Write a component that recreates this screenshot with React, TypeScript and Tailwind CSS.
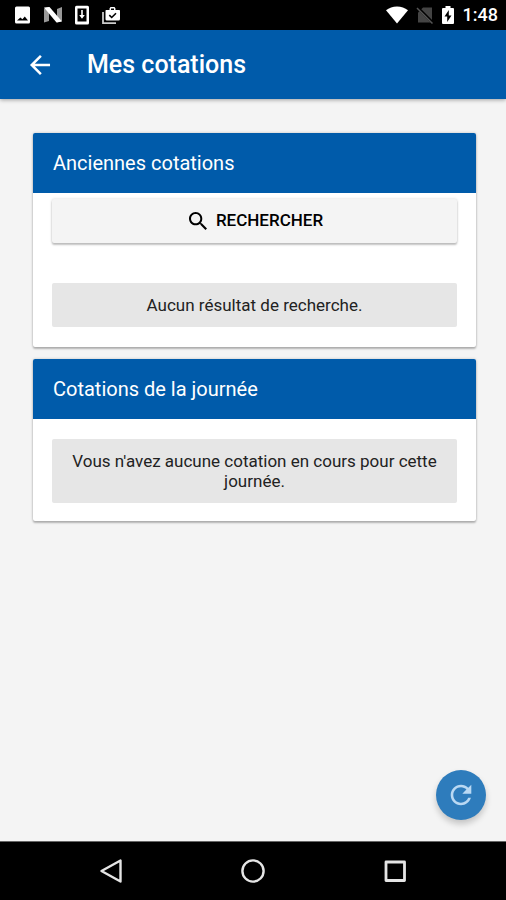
import type { ReactNode } from "react";

function StatusBar() {
  return (
    <div className="flex h-[30px] items-center justify-between bg-black pr-2 pl-3.5 text-white">
      <div className="flex items-center gap-[11px]">
        <svg viewBox="0 0 18 20" className="h-5 w-[18px]">
          <path fill="#fff" d="M2.5 1.5h12a1.5 1.5 0 0 1 1.500 1.500v14a1.500 1.500 0 0 1-1.500 1.500h-12A1.500 1.500 0 0 1 1 17V3a1.500 1.500 0 0 1 1.500-1.500z" />
          <path fill="#000" d="M3 15.500h11l-3.200-4-2.400 2.800-2-1.800z" />
        </svg>
        <svg viewBox="0 0 20 20" className="h-5 w-5">
          <path fill="#999" d="M1 3.500 6 2v14l-5 1.500zM14 4l5-2v14l-5 1.500z" />
          <path fill="#fff" d="M1 2.500 6.500 2 19 16.500l-5.500 1z" />
        </svg>
        <svg viewBox="0 0 16 20" className="h-5 w-4">
          <rect x="1" y="0.800" width="14" height="18.600" rx="1.500" fill="#fff" />
          <path fill="#000" d="M3.500 3.500h9v13h-9z" />
          <path fill="#fff" d="M7.200 5h1.600v5h2L8 13.800 5.200 10h2z" />
        </svg>
        <svg viewBox="0 0 20 20" className="h-5 w-5">
          <path fill="none" stroke="#ccc" strokeWidth="1.800" d="M2 7v11.200h13" />
          <path fill="#fff" d="M8.500 3.500 9.500 2h4l1 1.500V5h3.700a.8.8 0 0 1 .8.8V14a1.500 1.500 0 0 1-1.500 1.500h-12A1.500 1.500 0 0 1 4.500 14V5.800a.8.8 0 0 1 .8-.8h3.200zM10 5h3V3.500h-3z" />
          <path fill="none" stroke="#000" strokeWidth="1.600" d="m8.300 10.200 2.400 2.300L15 8.200" />
        </svg>
      </div>
      <div className="flex items-center">
        <svg viewBox="0 0 24 20" className="h-5 w-6">
          <path fill="#fff" d="M12 18.500 1 5.200C4 2.900 7.800 1.500 12 1.500s8 1.400 11 3.700z" />
        </svg>
        <svg viewBox="0 0 20 20" className="ml-1.5 h-5 w-5">
          <path fill="#444" d="M8 2.500h9v15H3V7.500z" />
          <path stroke="#000" strokeWidth="3" d="m3 3 15 15" />
          <path stroke="#555" strokeWidth="1.500" d="m2 3 15.500 15.500" />
        </svg>
        <svg viewBox="0 0 14 20" className="ml-1.5 h-5 w-3.5">
          <path fill="#fff" d="M4.500 1h5v2H12a1 1 0 0 1 1 1v14a1 1 0 0 1-1 1H2a1 1 0 0 1-1-1V4a1 1 0 0 1 1-1h2.500z" />
          <path fill="#000" d="M7.800 5 3.500 11.500h2.700V17l4.300-6.500H7.800z" />
        </svg>
        <span className="ml-2 text-lg leading-none font-medium">1:48</span>
      </div>
    </div>
  );
}

function Card({ title, children }: { title: string; children: ReactNode }) {
  return (
    <section className="overflow-hidden rounded-[2px] bg-white shadow-[0_2px_2px_rgba(0,0,0,0.24),0_0_3px_rgba(0,0,0,0.2)]">
      <h2 className="bg-[#005baa] px-5 py-4 text-xl leading-7 font-normal text-white">{title}</h2>
      {children}
    </section>
  );
}

function Message({ children }: { children: ReactNode }) {
  return (
    <p className="rounded-[2px] bg-[#e6e6e6] px-3 py-3 text-center text-[17px] leading-5 text-[#222]">
      {children}
    </p>
  );
}

export default function App() {
  return (
    <div className="flex min-h-screen flex-col bg-[#f4f4f4] font-[Roboto,sans-serif]">
      <StatusBar />

      <header className="flex h-[69px] items-center bg-[#005baa] pl-[25px] text-white shadow-[0_1px_4px_rgba(0,0,0,0.35)]">
        <button type="button" aria-label="Retour">
          <svg viewBox="0 0 512 512" className="size-[30px]" fill="currentColor">
            <path d="M427 234.625H167.296l119.702-119.702L256 85 85 256l171 171 29.922-29.924-118.626-119.701H427v-42.750z" />
          </svg>
        </button>
        <h1 className="pl-8 text-[25px] font-medium">Mes cotations</h1>
      </header>

      <main className="relative flex flex-1 flex-col gap-3 pt-[34px] pr-[30px] pl-[33px]">
        <Card title="Anciennes cotations">
          <div className="px-[19px] pt-1.5 pb-5">
            <button
              type="button"
              className="flex h-11 w-full items-center justify-center gap-1.5 rounded-[2px] bg-[#f4f4f4] text-[17px] font-medium text-black shadow-[0_2px_2px_rgba(0,0,0,0.22),0_0_3px_rgba(0,0,0,0.16)]"
            >
              <svg viewBox="0 0 512 512" className="size-6" fill="currentColor">
                <path d="M337.509 305.372h-17.501l-6.571-5.486c20.791-25.232 33.922-57.054 33.922-93.257C347.358 127.632 283.896 64 205.135 64 127.452 64 64 127.632 64 206.629s63.452 142.628 142.225 142.628c35.011 0 67.831-13.167 92.991-34.008l6.561 5.487v17.551L415.180 448 448 415.086 337.509 305.372zm-131.284 0c-54.702 0-98.463-43.887-98.463-98.743 0-54.858 43.761-98.742 98.463-98.742 54.700 0 98.462 43.884 98.462 98.742 0 54.856-43.762 98.743-98.462 98.743z" />
              </svg>
              RECHERCHER
            </button>
            <div className="pt-10">
              <Message>Aucun résultat de recherche.</Message>
            </div>
          </div>
        </Card>

        <Card title="Cotations de la journée">
          <div className="px-[19px] pt-5 pb-[18px]">
            <Message>Vous n'avez aucune cotation en cours pour cette journée.</Message>
          </div>
        </Card>

        {/* floating refresh button */}
        <button
          type="button"
          aria-label="Actualiser"
          className="absolute right-5 bottom-[21px] flex size-[50px] items-center justify-center rounded-full bg-[#2e7cbc] text-[#b9d8f3] shadow-[0_4px_6px_rgba(0,0,0,0.2)]"
        >
          <svg viewBox="0 0 512 512" className="size-[30px]" fill="currentColor">
            <path d="M256 388c-72.597 0-132-59.405-132-132 0-72.601 59.403-132 132-132 36.300 0 69.299 15.400 92.406 39.601L278 234h154V80l-51.698 51.702C348.406 99.798 304.406 80 256 80c-96.797 0-176 79.203-176 176s78.094 176 176 176c81.045 0 148.287-54.134 169.401-128H378.850c-18.745 49.561-67.138 84-122.850 84z" />
          </svg>
        </button>
      </main>

      <nav className="grid h-[59px] grid-cols-3 items-center border-t border-[#666] bg-black px-10 text-[#e5e5e5]">
        <button type="button" aria-label="Précédent" className="justify-self-center">
          <svg viewBox="0 0 24 24" className="size-6" fill="none" stroke="currentColor" strokeWidth="2.400" strokeLinejoin="round">
            <path d="M21.500 1.500v21L2.500 12z" />
          </svg>
        </button>
        <button type="button" aria-label="Accueil" className="justify-self-center">
          <svg viewBox="0 0 24 24" className="size-6" fill="none" stroke="currentColor" strokeWidth="2.400">
            <circle cx="12" cy="12" r="10.600" />
          </svg>
        </button>
        <button type="button" aria-label="Applications récentes" className="justify-self-center">
          <svg viewBox="0 0 24 24" className="size-6" fill="none" stroke="currentColor" strokeWidth="2.800" strokeLinejoin="round">
            <rect x="3" y="3" width="18.500" height="18.500" />
          </svg>
        </button>
      </nav>
    </div>
  );
}
